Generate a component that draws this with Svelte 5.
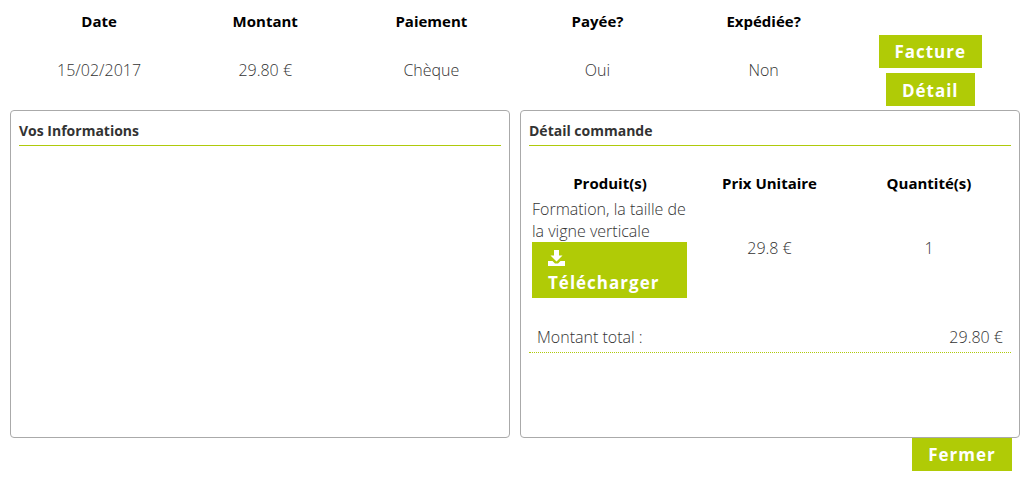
<script lang="ts">
  const summary = [
    { label: 'Date', value: '15/02/2017' },
    { label: 'Montant', value: '29.80 €' },
    { label: 'Paiement', value: 'Chèque' },
    { label: 'Payée?', value: 'Oui' },
    { label: 'Expédiée?', value: 'Non' },
  ]
</script>

<div class="page">
  <section class="summary">
    {#each summary as col (col.label)}
      <div class="col">
        <div class="label">{col.label}</div>
        <div class="value">{col.value}</div>
      </div>
    {/each}
    <div class="actions">
      <button class="btn facture">Facture</button>
      <button class="btn detail">Détail</button>
    </div>
  </section>

  <section class="panels">
    <div class="panel">
      <h3>Vos Informations</h3>
    </div>
    <div class="panel">
      <h3>Détail commande</h3>
      <div class="lines">
        <div class="th">Produit(s)</div>
        <div class="th">Prix Unitaire</div>
        <div class="th">Quantité(s)</div>
        <div class="product">
          <div class="name">Formation, la taille de la vigne verticale</div>
          <button class="btn download">
            <svg width="17" height="16" viewBox="0 0 17 16" aria-hidden="true">
              <path d="M6 0h5v5.500h3.500L8.500 11.500 2.500 5.500H6z" fill="#fff" />
              <path d="M0 11h4.500L7 13.500h3l2.500-2.500H17V16H0z" fill="#fff" />
            </svg>
            <span>Télécharger</span>
          </button>
        </div>
        <div class="cell">29.8 €</div>
        <div class="cell">1</div>
      </div>
      <div class="total">
        <span>Montant total :</span>
        <span>29.80 €</span>
      </div>
    </div>
  </section>

  <div class="footer">
    <button class="btn fermer">Fermer</button>
  </div>
</div>

<style>
  :global(body) {
    background: #fff;
  }
  .page {
    width: 1031px;
    height: 493px;
    box-sizing: border-box;
    padding: 0 11px 0 10px;
    font-family: 'Open Sans', sans-serif;
    color: #333;
    overflow: hidden;
  }
  .summary {
    display: grid;
    grid-template-columns: repeat(5, 166.15px) 167px;
    height: 110px;
    padding-left: 6px;
  }
  .col {
    text-align: center;
  }
  .label {
    margin-top: 11px;
    height: 20px;
    line-height: 20px;
    font-size: 15px;
    font-weight: 700;
    color: #000;
  }
  .value {
    margin-top: 28px;
    line-height: 22px;
    font-size: 16px;
    font-weight: 300;
  }
  .actions {
    display: flex;
    flex-direction: column;
    align-items: center;
    gap: 5px;
    padding-top: 35px;
  }
  .btn {
    border: 0;
    padding: 0;
    background: #b0cb06;
    color: #fff;
    font-family: inherit;
    font-size: 17px;
    font-weight: 700;
    letter-spacing: 1px;
  }
  .facture,
  .detail,
  .fermer {
    height: 33px;
  }
  .facture {
    width: 103px;
  }
  .detail {
    width: 89px;
    padding-top: 1px;
  }
  .panels {
    display: flex;
    gap: 10px;
  }
  .panel {
    width: 500px;
    height: 328px;
    box-sizing: border-box;
    border: 1px solid #aaa;
    border-radius: 4px;
    padding: 8px 8px 0;
  }
  h3 {
    margin: 0;
    height: 26px;
    line-height: 24px;
    border-bottom: 1px solid #afca0b;
    font-size: 14px;
    font-weight: 700;
    color: #333;
  }
  .lines {
    display: grid;
    grid-template-columns: 162px 157px 162px;
    grid-template-rows: 52px auto;
    margin-bottom: 28px;
  }
  .th {
    align-self: end;
    line-height: 20px;
    padding-bottom: 5px;
    text-align: center;
    font-size: 15px;
    font-weight: 700;
    color: #000;
  }
  .product {
    padding: 0 0 0 3px;
    font-size: 16px;
    font-weight: 300;
    line-height: 22px;
  }
  .name {
    width: 158px;
  }
  .download {
    display: block;
    width: 155px;
    height: 56px;
    padding: 7px 16px 0;
    text-align: left;
    line-height: 24px;
  }
  .download svg {
    display: block;
    margin-top: -3px;
    margin-bottom: 5px;
  }
  .download span {
    display: block;
  }
  .cell {
    align-self: center;
    text-align: center;
    font-size: 16px;
    font-weight: 300;
    line-height: 22px;
  }
  .total {
    display: flex;
    justify-content: space-between;
    padding: 0 8px;
    height: 26px;
    line-height: 22px;
    border-bottom: 1px dotted #afca0b;
    font-size: 16px;
    font-weight: 300;
  }
  .footer {
    display: flex;
    justify-content: flex-end;
    padding-right: 8px;
  }
  .fermer {
    width: 100px;
  }
</style>
